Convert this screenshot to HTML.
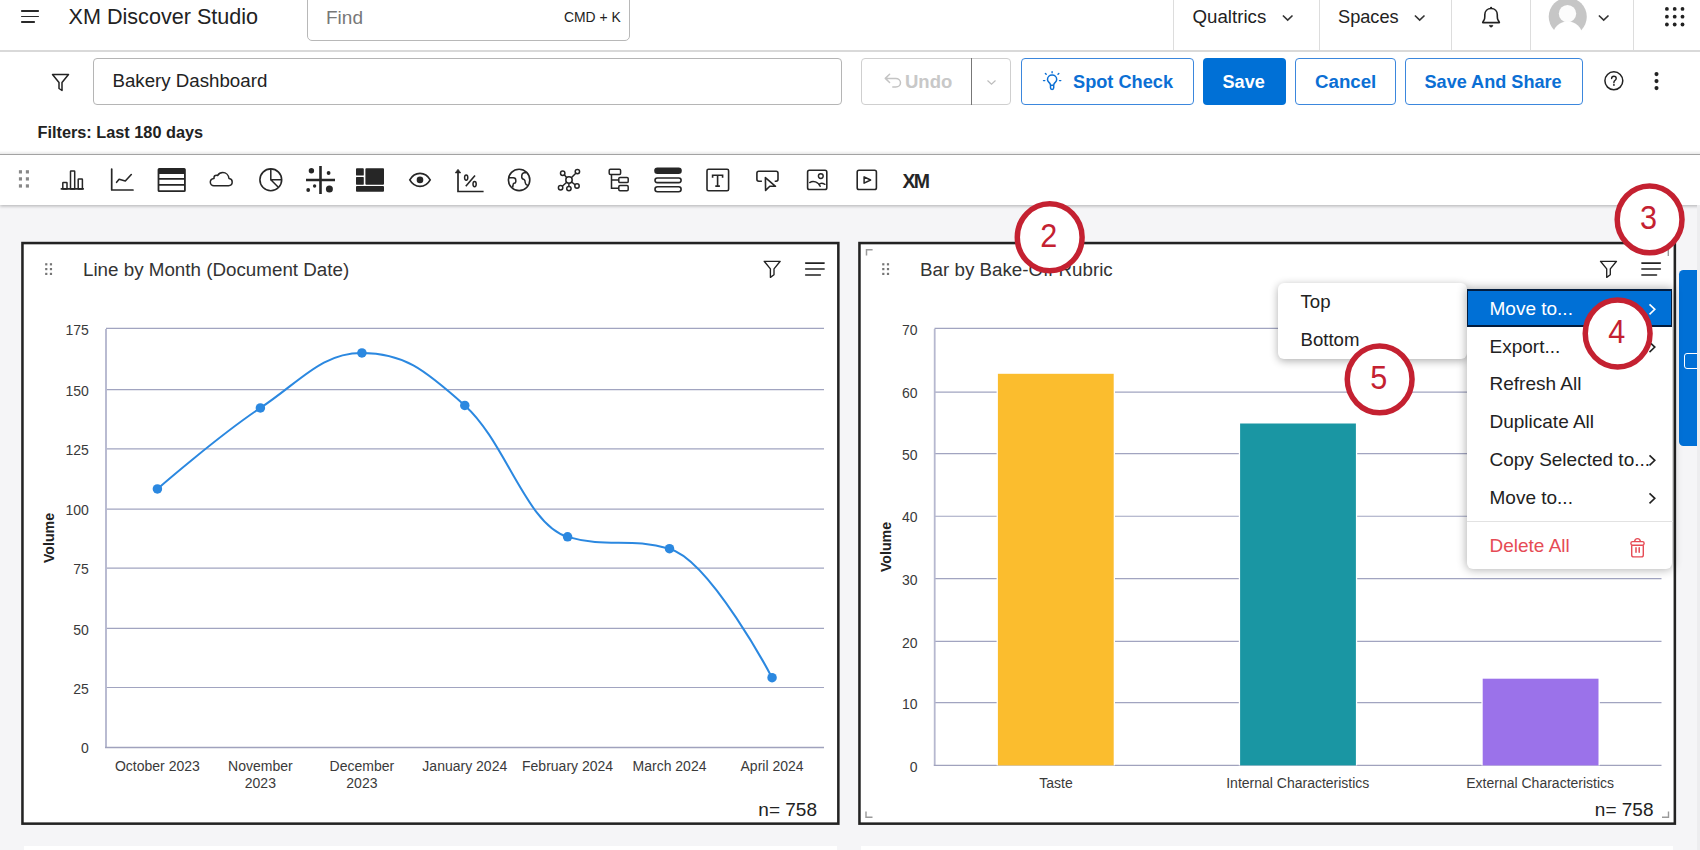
<!DOCTYPE html><html><head><meta charset="utf-8"><style>
html,body{margin:0;padding:0;width:1700px;height:850px;overflow:hidden;background:#f5f5f7;font-family:"Liberation Sans",sans-serif;}
.t{position:absolute;white-space:nowrap;}
</style></head><body>
<div style="position:absolute;left:0px;top:0px;width:1700px;height:154px;background:#fff;"></div>
<div style="position:absolute;left:0px;top:50px;width:1700px;height:1.5px;background:#d9d9d9;"></div>
<div style="position:absolute;left:21.2px;top:10.45px;width:17.6px;height:1.6px;background:#2a2a2a;border-radius:0.8px;"></div>
<div style="position:absolute;left:21.2px;top:15.75px;width:17.6px;height:1.6px;background:#2a2a2a;border-radius:0.8px;"></div>
<div style="position:absolute;left:21.2px;top:21.05px;width:13.7px;height:1.6px;background:#2a2a2a;border-radius:0.8px;"></div>
<div class="t" style="left:68.50px;top:6.21px;font-size:21.6px;line-height:21.6px;color:#222;">XM Discover Studio</div>
<div style="position:absolute;left:306.5px;top:-6px;width:323.5px;height:47px;box-sizing:border-box;border:1px solid #b8b8b8;border-radius:5px;background:#fff;"></div>
<div class="t" style="left:326.00px;top:8.31px;font-size:19px;line-height:19px;color:#777;">Find</div>
<div class="t" style="left:564.00px;top:11.23px;font-size:13.9px;line-height:13.9px;color:#222;">CMD + K</div>
<div style="position:absolute;left:1172.5px;top:0px;width:1.2px;height:50px;background:#dddddd;"></div>
<div style="position:absolute;left:1318.5px;top:0px;width:1.2px;height:50px;background:#dddddd;"></div>
<div style="position:absolute;left:1451px;top:0px;width:1.2px;height:50px;background:#dddddd;"></div>
<div style="position:absolute;left:1530px;top:0px;width:1.2px;height:50px;background:#dddddd;"></div>
<div style="position:absolute;left:1633px;top:0px;width:1.2px;height:50px;background:#dddddd;"></div>
<div class="t" style="left:1192.50px;top:7.97px;font-size:18.7px;line-height:18.7px;color:#222;">Qualtrics</div>
<div class="t" style="left:1338.00px;top:8.39px;font-size:18.2px;line-height:18.2px;color:#222;">Spaces</div>
<svg style="position:absolute;left:1281.5px;top:15px;overflow:visible;" width="11" height="7" viewBox="0 0 11 7"><path d="M0.9 0.5 L5.7 5.1 L10.5 0.5" fill="none" stroke="#333" stroke-width="1.6"/></svg>
<svg style="position:absolute;left:1414px;top:15px;overflow:visible;" width="11" height="7" viewBox="0 0 11 7"><path d="M0.9 0.5 L5.7 5.1 L10.5 0.5" fill="none" stroke="#333" stroke-width="1.6"/></svg>
<svg style="position:absolute;left:1598px;top:15px;overflow:visible;" width="11" height="7" viewBox="0 0 11 7"><path d="M0.9 0.5 L5.7 5.1 L10.5 0.5" fill="none" stroke="#333" stroke-width="1.6"/></svg>
<svg style="position:absolute;left:1481px;top:6px;overflow:visible;" width="20" height="22" viewBox="0 0 20 22"><path d="M1.7 16.6 C1.7 15.9 2.4 15.2 3 14.2 C3.6 13.2 3.8 12 3.8 10.5 V8.8 C3.8 5 6.4 2.5 10.1 2.5 C13.8 2.5 16.3 5 16.3 8.8 V10.5 C16.3 12 16.5 13.2 17.1 14.2 C17.7 15.2 18.4 15.9 18.4 16.6 Z" fill="none" stroke="#222" stroke-width="1.6" stroke-linejoin="round"/><path d="M8.4 19.4 H11.8 C11.5 20.6 10.9 21 10.1 21 C9.3 21 8.7 20.6 8.4 19.4 Z" fill="#222" stroke="#222" stroke-width="0.8" stroke-linejoin="round"/><circle cx="10.1" cy="1.9" r="1.1" fill="#222"/></svg>
<svg style="position:absolute;left:1548px;top:-6px;overflow:visible;" width="40" height="50" viewBox="0 0 40 50"><circle cx="19.75" cy="22.8" r="19.05" fill="#c6c6c6"/><circle cx="19.5" cy="19.6" r="8.7" fill="#fcfcfc"/><ellipse cx="19.6" cy="41.4" rx="14.6" ry="14" fill="#fff"/></svg>
<svg style="position:absolute;left:1665px;top:7px;overflow:visible;" width="20" height="20" viewBox="0 0 20 20"><circle cx="1.9" cy="1.9" r="1.9" fill="#222"/><circle cx="1.9" cy="9.7" r="1.9" fill="#222"/><circle cx="1.9" cy="17.5" r="1.9" fill="#222"/><circle cx="9.7" cy="1.9" r="1.9" fill="#222"/><circle cx="9.7" cy="9.7" r="1.9" fill="#222"/><circle cx="9.7" cy="17.5" r="1.9" fill="#222"/><circle cx="17.5" cy="1.9" r="1.9" fill="#222"/><circle cx="17.5" cy="9.7" r="1.9" fill="#222"/><circle cx="17.5" cy="17.5" r="1.9" fill="#222"/></svg>
<svg style="position:absolute;left:51px;top:73px;overflow:visible;" width="20" height="20" viewBox="0 0 20 20"><path d="M1.5 1.5 H17.5 L11 9.5 V17.5 L8 15.5 V9.5 Z" fill="none" stroke="#222" stroke-width="1.5" stroke-linejoin="round"/></svg>
<div style="position:absolute;left:92.5px;top:58px;width:749px;height:46.5px;box-sizing:border-box;border:1.3px solid #b5b5b5;border-radius:4px;background:#fff;"></div>
<div class="t" style="left:112.50px;top:71.67px;font-size:18.7px;line-height:18.7px;color:#222;">Bakery Dashboard</div>
<div style="position:absolute;left:861px;top:58px;width:150px;height:46.5px;box-sizing:border-box;border:1.3px solid #cfcfcf;border-radius:4px;background:#fff;"></div>
<div style="position:absolute;left:970.5px;top:58px;width:1.3px;height:46.5px;background:#777;"></div>
<svg style="position:absolute;left:0;top:0;overflow:visible" width="1" height="1"><path d="M889.6 74.3 L885.3 78.4 L889.6 82.5 M885.6 78.4 H895.8 C898.5 78.4 900.5 80.4 900.5 82.7 C900.5 85.1 898.5 87 895.8 87 H892.8" fill="none" stroke="#c4c4c4" stroke-width="1.5" stroke-linejoin="round" stroke-linecap="round"/></svg>
<div class="t" style="left:905.00px;top:73.14px;font-size:18.5px;line-height:18.5px;color:#c8c8c8;font-weight:700;">Undo</div>
<svg style="position:absolute;left:986.5px;top:79.5px;overflow:visible;" width="9" height="5" viewBox="0 0 9 5"><path d="M0.5 0.5 L4.5 4.2 L8.5 0.5" fill="none" stroke="#bdbdbd" stroke-width="1.2"/></svg>
<div style="position:absolute;left:1020.5px;top:58px;width:173px;height:46.5px;box-sizing:border-box;border:1.6px solid #3b87dd;border-radius:4px;background:#fff;"></div>
<svg style="position:absolute;left:0;top:0;overflow:visible" width="1" height="1"><path d="M1050.5 85.2 C1050.4 83.9 1049.9 83.2 1049.0 82.4 C1048.1 81.5 1047.5 80.5 1047.5 79.4 C1047.5 76.9 1049.6 75 1052.1 75 C1054.6 75 1056.7 76.9 1056.7 79.4 C1056.7 80.5 1056.1 81.5 1055.2 82.4 C1054.3 83.2 1053.8 83.9 1053.7 85.2 Z M1050.5 85.2 V87.8 C1050.5 88.8 1051.2 89.4 1052.1 89.4 C1053 89.4 1053.7 88.8 1053.7 87.8 V85.2" fill="none" stroke="#0b6fd4" stroke-width="1.5" stroke-linejoin="round"/><path d="M1052.1 71.6 V72.8 M1045.4 73.5 L1046.2 74.3 M1058.8 73.5 L1058 74.3 M1043.5 80.6 H1044.8 M1059.5 80.6 H1060.8" stroke="#0b6fd4" stroke-width="1.4" stroke-linecap="round"/></svg>
<div class="t" style="left:1073.00px;top:73.39px;font-size:18.2px;line-height:18.2px;color:#0b6fd4;font-weight:700;">Spot Check</div>
<div style="position:absolute;left:1202.5px;top:57.5px;width:83px;height:47px;background:#0070d6;border-radius:4px;"></div>
<div class="t" style="left:1222.50px;top:73.47px;font-size:18.1px;line-height:18.1px;color:#fff;font-weight:700;">Save</div>
<div style="position:absolute;left:1295px;top:58px;width:101px;height:46.5px;box-sizing:border-box;border:1.6px solid #3b87dd;border-radius:4px;background:#fff;"></div>
<div class="t" style="left:1315.00px;top:72.97px;font-size:18.7px;line-height:18.7px;color:#0b6fd4;font-weight:700;">Cancel</div>
<div style="position:absolute;left:1405px;top:58px;width:178px;height:46.5px;box-sizing:border-box;border:1.6px solid #3b87dd;border-radius:4px;background:#fff;"></div>
<div class="t" style="left:1424.50px;top:73.47px;font-size:18.1px;line-height:18.1px;color:#0b6fd4;font-weight:700;">Save And Share</div>
<svg style="position:absolute;left:0;top:0;overflow:visible" width="1" height="1"><circle cx="1613.85" cy="80.8" r="8.95" fill="none" stroke="#222" stroke-width="1.5"/><path d="M1611.6 78.5 C1611.6 77 1612.6 76.3 1613.9 76.3 C1615.3 76.3 1616.2 77.2 1616.2 78.4 C1616.2 79.6 1615.3 80.1 1614.6 80.7 C1614 81.2 1613.9 81.7 1613.9 82.7" fill="none" stroke="#222" stroke-width="1.4" stroke-linecap="round"/><circle cx="1613.9" cy="84.9" r="0.95" fill="#222"/></svg>
<svg style="position:absolute;left:0;top:0;overflow:visible" width="1" height="1"><circle cx="1656.5" cy="74.1" r="2.05" fill="#222"/><circle cx="1656.5" cy="81.1" r="2.05" fill="#222"/><circle cx="1656.5" cy="88.1" r="2.05" fill="#222"/></svg>
<div class="t" style="left:37.50px;top:124.20px;font-size:16.3px;line-height:16.3px;color:#222;font-weight:700;">Filters: Last 180 days</div>
<div style="position:absolute;left:0px;top:150.5px;width:1700px;height:3.5px;background:linear-gradient(#fdfdfd,#e9e9e9);"></div>
<div style="position:absolute;left:0px;top:154px;width:1700px;height:1px;background:#a4a4a4;"></div>
<div style="position:absolute;left:0px;top:155px;width:1700px;height:50px;background:#fff;box-shadow:0 1.5px 3px rgba(0,0,0,0.24);"></div>
<svg style="position:absolute;left:0;top:0" width="1700" height="850"><rect x="18.90" y="170.20" width="3.1" height="3.3" fill="#888"/><rect x="18.90" y="177.25" width="3.1" height="3.3" fill="#888"/><rect x="18.90" y="184.30" width="3.1" height="3.3" fill="#888"/><rect x="25.85" y="170.20" width="3.1" height="3.3" fill="#888"/><rect x="25.85" y="177.25" width="3.1" height="3.3" fill="#888"/><rect x="25.85" y="184.30" width="3.1" height="3.3" fill="#888"/><path d="M61.3 188.9 H83.3" stroke="#262626" stroke-width="1.6" stroke-linecap="round"/><rect x="62.8" y="182.6" width="4.2" height="6.3" rx="0.5" fill="none" stroke="#262626" stroke-width="1.5"/><rect x="70.5" y="170.9" width="4.2" height="18" rx="0.5" fill="none" stroke="#262626" stroke-width="1.5"/><rect x="78.2" y="179.1" width="4.2" height="9.8" rx="0.5" fill="none" stroke="#262626" stroke-width="1.5"/><path d="M111.7 169 V190 H133" fill="none" stroke="#262626" stroke-width="1.7" stroke-linecap="round" stroke-linejoin="round"/><path d="M116.6 182.3 L119.1 179.3 L125.3 181 L131.3 174.5" fill="none" stroke="#262626" stroke-width="1.6" stroke-linejoin="round" stroke-linecap="round"/><rect x="158.5" y="168.8" width="26.4" height="22.4" rx="0.8" fill="none" stroke="#262626" stroke-width="1.8"/><rect x="158.5" y="168.8" width="26.4" height="5.2" fill="#262626"/><path d="M158.5 178.9 H185 M158.5 184.9 H185" stroke="#262626" stroke-width="1.7"/><path d="M213.9 185.7 H228.5 C230.6 185.7 232.2 184.1 232.2 182.1 C232.2 180.2 230.8 178.7 229 178.5 C228.6 175.2 226 172.6 222.8 172.6 C220.6 172.6 218.7 173.7 217.6 175.5 C217.2 175.3 216.8 175.2 216.4 175.2 C215 175.2 214 176.3 214 177.6 L214 178.4 C211.9 178.6 210.3 180.2 210.3 182.1 C210.3 184.1 211.9 185.7 213.9 185.7 Z" fill="none" stroke="#262626" stroke-width="1.5" stroke-linejoin="round"/><circle cx="270.8" cy="179.8" r="10.9" fill="none" stroke="#262626" stroke-width="1.6"/><path d="M270.8 168.9 V179.8 H281.7 M270.8 179.8 L278.3 187.2" fill="none" stroke="#262626" stroke-width="1.5"/><path d="M320.5 166 V194 M306 180 H335" stroke="#262626" stroke-width="2.6"/><circle cx="311.4" cy="170.8" r="2.7" fill="#262626"/><circle cx="328.6" cy="173" r="1.9" fill="#262626"/><circle cx="314.6" cy="186" r="1.7" fill="#262626"/><circle cx="308.2" cy="190" r="1.9" fill="#262626"/><circle cx="329.4" cy="189" r="3.5" fill="#262626"/><rect x="356" y="168.2" width="7.8" height="7.4" rx="0.9" fill="#262626"/><rect x="356" y="177.1" width="7.8" height="7.6" rx="0.6" fill="#262626"/><rect x="365.4" y="168.2" width="18.6" height="16.5" rx="0.9" fill="#262626"/><rect x="356" y="186.1" width="28" height="5.6" rx="0.9" fill="#262626"/><path d="M409.8 179.9 C412.3 175.4 415.7 173.4 420 173.4 C424.3 173.4 427.7 175.4 430.2 179.9 C427.7 184.4 424.3 186.4 420 186.4 C415.7 186.4 412.3 184.4 409.8 179.9 Z" fill="none" stroke="#262626" stroke-width="1.7"/><circle cx="420" cy="179.9" r="3.3" fill="#262626"/><path d="M458 171.5 V191.5 H483.6" fill="none" stroke="#262626" stroke-width="1.7"/><path d="M455.2 172.9 L458 169.2 L460.8 172.9 Z" fill="#262626" stroke="#262626" stroke-width="0.6" stroke-linejoin="round"/><ellipse cx="466.2" cy="177.6" rx="1.6" ry="2.6" fill="none" stroke="#262626" stroke-width="1.5"/><ellipse cx="474.6" cy="184.1" rx="1.6" ry="2.6" fill="none" stroke="#262626" stroke-width="1.5"/><path d="M475 175.4 L465.8 186.2" stroke="#262626" stroke-width="1.6"/><circle cx="519.1" cy="179.9" r="10.7" fill="none" stroke="#262626" stroke-width="1.6"/><path d="M508.8 177.7 H513.2 C514.8 177.7 515.8 178.8 515.8 180.2 V181.8 C515.8 182.8 515 183.3 514 183.3 C513.3 183.6 513 184.5 513 185.5 L512.6 187.5" fill="none" stroke="#262626" stroke-width="1.5" stroke-linejoin="round"/><path d="M526.4 172.7 H524 C522.6 172.9 521.8 174.5 521.7 176.3 C521.6 177.8 522.5 179.2 524 179.5 C525 179.9 525.2 181.5 525.3 183 C525.5 184.3 526.3 185 527.9 185.4" fill="none" stroke="#262626" stroke-width="1.5" stroke-linejoin="round"/><circle cx="569" cy="180" r="3.2" fill="none" stroke="#262626" stroke-width="1.5"/><circle cx="562.7" cy="173.2" r="2.2" fill="none" stroke="#262626" stroke-width="1.5"/><circle cx="577.4" cy="171.6" r="2.2" fill="none" stroke="#262626" stroke-width="1.5"/><circle cx="560.6" cy="187.8" r="2.2" fill="none" stroke="#262626" stroke-width="1.5"/><circle cx="568.9" cy="188.6" r="2.2" fill="none" stroke="#262626" stroke-width="1.5"/><circle cx="577" cy="186" r="2.2" fill="none" stroke="#262626" stroke-width="1.5"/><path d="M564.3 174.8 L566.8 177.8 M575.8 173.2 L571.3 177.8 M562.3 186.2 L566.7 182.2 M568.9 186.4 V183.2 M575.3 184.8 L571.5 182" stroke="#262626" stroke-width="1.5"/><rect x="609.2" y="169.2" width="11.4" height="5.3" rx="1.2" fill="none" stroke="#262626" stroke-width="1.5"/><rect x="618.8" y="177.4" width="9.4" height="5.2" rx="1.2" fill="none" stroke="#262626" stroke-width="1.5"/><rect x="618.8" y="185.6" width="9.4" height="5.2" rx="1.2" fill="none" stroke="#262626" stroke-width="1.5"/><path d="M611.5 174.5 V188.2 H618.8 M611.5 180 H618.8" fill="none" stroke="#262626" stroke-width="1.5"/><rect x="654.2" y="167.4" width="27.6" height="6.5" rx="3.2" fill="#262626"/><rect x="655" y="178" width="26.1" height="4.6" rx="2.3" fill="none" stroke="#262626" stroke-width="1.6"/><rect x="655" y="186.7" width="26.1" height="5" rx="2.5" fill="none" stroke="#262626" stroke-width="1.6"/><rect x="707" y="169.3" width="21.6" height="21.4" rx="1.5" fill="none" stroke="#262626" stroke-width="1.6"/><path d="M712.6 177.8 V175.2 H722.6 V177.8 M717.6 175.2 V186.1 M715.3 186.1 H719.9" fill="none" stroke="#262626" stroke-width="1.6"/><path d="M761.9 181.2 H758.8 C757.6 181.2 756.9 180.5 756.9 179.3 V173.2 C756.9 172 757.6 171.3 758.8 171.3 H776.1 C777.3 171.3 778 172 778 173.2 V179.3 C778 180.5 777.3 181.2 776.1 181.2 H774.7" fill="none" stroke="#262626" stroke-width="1.6"/><path d="M765.4 177.6 L775.5 186.3 L769.8 186.3 L765.6 190.4 Z" fill="none" stroke="#262626" stroke-width="1.6" stroke-linejoin="round"/><rect x="807.6" y="170.3" width="19.2" height="19.2" rx="1.8" fill="none" stroke="#262626" stroke-width="1.6"/><circle cx="820.8" cy="176.1" r="2.4" fill="none" stroke="#262626" stroke-width="1.4"/><path d="M809.7 182.6 C811.5 181.3 813.5 181.2 815.5 181.9 C818 182.9 819.8 184.5 820.2 186.4 M818.8 184.6 C820 183.2 822.5 182.9 824.9 184.3" fill="none" stroke="#262626" stroke-width="1.4" stroke-linecap="round"/><rect x="857.2" y="170.3" width="19.2" height="19.2" rx="1.8" fill="none" stroke="#262626" stroke-width="1.6"/><path d="M864.1 176.8 V183.2 L870.6 180 Z" fill="none" stroke="#262626" stroke-width="1.5" stroke-linejoin="round"/></svg>
<div class="t" style="left:902.50px;top:171.99px;font-size:19.5px;line-height:19.5px;color:#262626;font-weight:700;letter-spacing:-1.8px;transform:scaleY(1.05);transform-origin:0 100%;">XM</div>
<div style="position:absolute;left:21.2px;top:241.8px;width:818.4px;height:583.1px;background:#fff;"></div>
<div style="position:absolute;left:858.2px;top:241.8px;width:817.9px;height:583.1px;background:#fff;"></div>
<div style="position:absolute;left:23.8px;top:846.2px;width:813.5px;height:10px;background:#fff;"></div>
<div style="position:absolute;left:861px;top:846.2px;width:812px;height:10px;background:#fff;"></div>
<div style="position:absolute;left:1697.4px;top:205px;width:2.6px;height:645px;background:#ededef;"></div>
<div style="position:absolute;left:1679.4px;top:269.6px;width:18px;height:176.4px;background:#0070d6;border-radius:4.5px 0 0 4.5px;overflow:hidden"><div style="position:absolute;left:4.4px;top:83.1px;width:18px;height:16px;box-sizing:border-box;border:1.6px solid #fff;border-radius:3px;"></div></div>
<svg style="position:absolute;left:0;top:0" width="1700" height="850"><rect x="22.45" y="243.05" width="815.9" height="580.6" fill="none" stroke="#232323" stroke-width="2.55"/><rect x="859.45" y="243.05" width="815.4" height="580.6" fill="none" stroke="#232323" stroke-width="2.55"/><rect x="45.16" y="263.20" width="2.2" height="2.2" fill="#767676"/><rect x="45.16" y="268.00" width="2.2" height="2.2" fill="#767676"/><rect x="45.16" y="272.80" width="2.2" height="2.2" fill="#767676"/><rect x="49.86" y="263.20" width="2.2" height="2.2" fill="#767676"/><rect x="49.86" y="268.00" width="2.2" height="2.2" fill="#767676"/><rect x="49.86" y="272.80" width="2.2" height="2.2" fill="#767676"/><rect x="882.20" y="263.20" width="2.2" height="2.2" fill="#767676"/><rect x="882.20" y="268.00" width="2.2" height="2.2" fill="#767676"/><rect x="882.20" y="272.80" width="2.2" height="2.2" fill="#767676"/><rect x="886.90" y="263.20" width="2.2" height="2.2" fill="#767676"/><rect x="886.90" y="268.00" width="2.2" height="2.2" fill="#767676"/><rect x="886.90" y="272.80" width="2.2" height="2.2" fill="#767676"/><path d="M764.2 261.3 H780.2 L774.0 268.90000000000003 V274.8 L770.4000000000001 277.40000000000003 V268.90000000000003 Z" fill="none" stroke="#222" stroke-width="1.35" stroke-linejoin="round"/><path d="M805.6999999999999 263.05 H824.0999999999999 M805.6999999999999 269.0 H824.0999999999999 M805.6999999999999 274.95 H820.3" stroke="#222" stroke-width="1.65" stroke-linecap="round"/><path d="M1600.5 261.3 H1616.5 L1610.3 268.90000000000003 V274.8 L1606.7 277.40000000000003 V268.90000000000003 Z" fill="none" stroke="#222" stroke-width="1.35" stroke-linejoin="round"/><path d="M1641.9 263.05 H1660.3 M1641.9 269.0 H1660.3 M1641.9 274.95 H1656.5" stroke="#222" stroke-width="1.65" stroke-linecap="round"/><path d="M866.5 255.5 V249.7 H872.6" fill="none" stroke="#9a9a9a" stroke-width="1.5"/><path d="M866 811.5 V817.3 H872.5" fill="none" stroke="#9a9a9a" stroke-width="1.4"/><path d="M1662 817.3 H1668.5 V811.5" fill="none" stroke="#9a9a9a" stroke-width="1.4"/><path d="M1668.3 250 V256" fill="none" stroke="#9a9a9a" stroke-width="1.4"/><path d="M106 687.50 H824" stroke="#a1a4c0" stroke-width="1.2"/><path d="M106 628.36 H824" stroke="#a1a4c0" stroke-width="1.2"/><path d="M106 568.12 H824" stroke="#a1a4c0" stroke-width="1.2"/><path d="M106 509.06 H824" stroke="#a1a4c0" stroke-width="1.2"/><path d="M106 448.83 H824" stroke="#a1a4c0" stroke-width="1.2"/><path d="M106 389.65 H824" stroke="#a1a4c0" stroke-width="1.2"/><path d="M106 328.36 H824" stroke="#a1a4c0" stroke-width="1.2"/><path d="M106 329 V747.5" stroke="#b6b8cf" stroke-width="1.9"/><path d="M105 747.5 H824" stroke="#a0a2bd" stroke-width="1.3"/><path d="M157.40 488.95 C157.40 488.95 219.19 435.33 260.38 407.94 C300.99 380.93 321.30 352.94 361.91 352.94 C403.06 352.94 423.64 368.58 464.79 405.38 C505.90 442.15 526.46 525.02 567.57 536.87 C608.34 548.72 628.73 536.87 669.50 548.72 C710.52 560.57 772.05 677.70 772.05 677.70" fill="none" stroke="#2b88e0" stroke-width="2"/><circle cx="157.40" cy="488.95" r="4.75" fill="#2b88e0"/><circle cx="260.38" cy="407.94" r="4.75" fill="#2b88e0"/><circle cx="361.91" cy="352.94" r="4.75" fill="#2b88e0"/><circle cx="464.79" cy="405.38" r="4.75" fill="#2b88e0"/><circle cx="567.57" cy="536.87" r="4.75" fill="#2b88e0"/><circle cx="669.50" cy="548.72" r="4.75" fill="#2b88e0"/><circle cx="772.05" cy="677.70" r="4.75" fill="#2b88e0"/><path d="M934.5 702.59 H1661.5" stroke="#a1a4c0" stroke-width="1.2"/><path d="M934.5 641.42 H1661.5" stroke="#a1a4c0" stroke-width="1.2"/><path d="M934.5 578.59 H1661.5" stroke="#a1a4c0" stroke-width="1.2"/><path d="M934.5 516.24 H1661.5" stroke="#a1a4c0" stroke-width="1.2"/><path d="M934.5 453.54 H1661.5" stroke="#a1a4c0" stroke-width="1.2"/><path d="M934.5 392.06 H1661.5" stroke="#a1a4c0" stroke-width="1.2"/><path d="M934.5 328.36 H1661.5" stroke="#a1a4c0" stroke-width="1.2"/><path d="M934.7 329 V765.4" stroke="#b6b8cf" stroke-width="1.8"/><path d="M933.8 765.4 H1661.5" stroke="#a0a2bd" stroke-width="1.3"/><rect x="996.6" y="372.5" width="118.4" height="392.9" fill="#fff"/><rect x="997.9" y="373.8" width="115.8" height="391.59999999999997" fill="#fbbd2e"/><rect x="1238.8" y="422.2" width="118.4" height="343.2" fill="#fff"/><rect x="1240.1" y="423.5" width="115.8" height="341.9" fill="#1a96a3"/><rect x="1481.4" y="677.4000000000001" width="118.4" height="87.99999999999993" fill="#fff"/><rect x="1482.7" y="678.7" width="115.8" height="86.69999999999993" fill="#9b72ea"/></svg>
<div class="t" style="left:83.00px;top:260.88px;font-size:18.8px;line-height:18.8px;color:#333;">Line by Month (Document Date)</div>
<div class="t" style="left:920.00px;top:260.88px;font-size:18.8px;line-height:18.8px;color:#333;">Bar by Bake-Off Rubric</div>
<div class="t" style="right:1611.20px;top:740.65px;font-size:14px;line-height:14px;color:#3a3a3a;text-align:right;">0</div>
<div class="t" style="right:1611.20px;top:681.65px;font-size:14px;line-height:14px;color:#3a3a3a;text-align:right;">25</div>
<div class="t" style="right:1611.20px;top:622.51px;font-size:14px;line-height:14px;color:#3a3a3a;text-align:right;">50</div>
<div class="t" style="right:1611.20px;top:562.27px;font-size:14px;line-height:14px;color:#3a3a3a;text-align:right;">75</div>
<div class="t" style="right:1611.20px;top:503.21px;font-size:14px;line-height:14px;color:#3a3a3a;text-align:right;">100</div>
<div class="t" style="right:1611.20px;top:442.98px;font-size:14px;line-height:14px;color:#3a3a3a;text-align:right;">125</div>
<div class="t" style="right:1611.20px;top:383.80px;font-size:14px;line-height:14px;color:#3a3a3a;text-align:right;">150</div>
<div class="t" style="right:1611.20px;top:322.51px;font-size:14px;line-height:14px;color:#3a3a3a;text-align:right;">175</div>
<div class="t" style="right:782.40px;top:759.51px;font-size:14px;line-height:14px;color:#3a3a3a;text-align:right;">0</div>
<div class="t" style="right:782.40px;top:696.74px;font-size:14px;line-height:14px;color:#3a3a3a;text-align:right;">10</div>
<div class="t" style="right:782.40px;top:635.57px;font-size:14px;line-height:14px;color:#3a3a3a;text-align:right;">20</div>
<div class="t" style="right:782.40px;top:572.74px;font-size:14px;line-height:14px;color:#3a3a3a;text-align:right;">30</div>
<div class="t" style="right:782.40px;top:510.39px;font-size:14px;line-height:14px;color:#3a3a3a;text-align:right;">40</div>
<div class="t" style="right:782.40px;top:447.69px;font-size:14px;line-height:14px;color:#3a3a3a;text-align:right;">50</div>
<div class="t" style="right:782.40px;top:386.21px;font-size:14px;line-height:14px;color:#3a3a3a;text-align:right;">60</div>
<div class="t" style="right:782.40px;top:322.51px;font-size:14px;line-height:14px;color:#3a3a3a;text-align:right;">70</div>
<div class="t" style="left:7.40px;width:300px;text-align:center;top:758.95px;font-size:14px;line-height:14px;color:#3a3a3a;">October 2023</div>
<div class="t" style="left:110.38px;width:300px;text-align:center;top:758.95px;font-size:14px;line-height:14px;color:#3a3a3a;">November</div>
<div class="t" style="left:110.38px;width:300px;text-align:center;top:776.45px;font-size:14px;line-height:14px;color:#3a3a3a;">2023</div>
<div class="t" style="left:211.91px;width:300px;text-align:center;top:758.95px;font-size:14px;line-height:14px;color:#3a3a3a;">December</div>
<div class="t" style="left:211.91px;width:300px;text-align:center;top:776.45px;font-size:14px;line-height:14px;color:#3a3a3a;">2023</div>
<div class="t" style="left:314.79px;width:300px;text-align:center;top:758.95px;font-size:14px;line-height:14px;color:#3a3a3a;">January 2024</div>
<div class="t" style="left:417.57px;width:300px;text-align:center;top:758.95px;font-size:14px;line-height:14px;color:#3a3a3a;">February 2024</div>
<div class="t" style="left:519.50px;width:300px;text-align:center;top:758.95px;font-size:14px;line-height:14px;color:#3a3a3a;">March 2024</div>
<div class="t" style="left:622.05px;width:300px;text-align:center;top:758.95px;font-size:14px;line-height:14px;color:#3a3a3a;">April 2024</div>
<div class="t" style="left:906.00px;width:300px;text-align:center;top:776.35px;font-size:14px;line-height:14px;color:#3a3a3a;">Taste</div>
<div class="t" style="left:1147.80px;width:300px;text-align:center;top:776.35px;font-size:14px;line-height:14px;color:#3a3a3a;">Internal Characteristics</div>
<div class="t" style="left:1390.20px;width:300px;text-align:center;top:776.35px;font-size:14px;line-height:14px;color:#3a3a3a;">External Characteristics</div>
<div class="t" style="left:8.600000000000001px;top:530.9px;width:80px;height:14px;line-height:14px;text-align:center;font-size:14.2px;font-weight:700;color:#222;transform:rotate(-90deg);">Volume</div>
<div class="t" style="left:845.6px;top:539.5px;width:80px;height:14px;line-height:14px;text-align:center;font-size:14.2px;font-weight:700;color:#222;transform:rotate(-90deg);">Volume</div>
<div class="t" style="right:883.00px;top:800.11px;font-size:19px;line-height:19px;color:#222;text-align:right;">n= 758</div>
<div class="t" style="right:46.50px;top:800.11px;font-size:19px;line-height:19px;color:#222;text-align:right;">n= 758</div>
<div style="position:absolute;left:1277.6px;top:283.2px;width:189.2px;height:75.9px;background:#fff;border-radius:6px;box-shadow:0 2px 9px rgba(0,0,0,0.32);"></div>
<div class="t" style="left:1300.50px;top:292.75px;font-size:18.6px;line-height:18.6px;color:#222;">Top</div>
<div class="t" style="left:1300.50px;top:330.95px;font-size:18.6px;line-height:18.6px;color:#222;">Bottom</div>
<div style="position:absolute;left:1466.8px;top:289.4px;width:205.7px;height:279.6px;background:#fff;border-radius:0 0 6px 6px;box-shadow:0 0 10px 1px rgba(0,0,0,0.3);"></div>
<div style="position:absolute;left:1466.8px;top:289.4px;width:205.7px;height:37.5px;box-sizing:border-box;background:#0070d6;border:2px solid #021c3e;border-left-width:1.5px;border-right-width:1.5px;"></div>
<div class="t" style="left:1489.50px;top:298.71px;font-size:19px;line-height:19px;color:#fff;">Move to...</div>
<div class="t" style="left:1489.50px;top:336.51px;font-size:19px;line-height:19px;color:#222;">Export...</div>
<div class="t" style="left:1489.50px;top:374.11px;font-size:19px;line-height:19px;color:#222;">Refresh All</div>
<div class="t" style="left:1489.50px;top:412.11px;font-size:19px;line-height:19px;color:#222;">Duplicate All</div>
<div class="t" style="left:1489.50px;top:449.71px;font-size:19px;line-height:19px;color:#222;">Copy Selected to...</div>
<div class="t" style="left:1489.50px;top:487.71px;font-size:19px;line-height:19px;color:#222;">Move to...</div>
<div style="position:absolute;left:1466.5px;top:521px;width:206px;height:1px;background:#e2e2e2;"></div>
<div class="t" style="left:1489.50px;top:536.11px;font-size:19px;line-height:19px;color:#e64b55;">Delete All</div>
<svg style="position:absolute;left:0;top:0" width="1700" height="850"><path d="M1649.5 304.3 L1654.8 309.3 L1649.5 314.3" fill="none" stroke="#fff" stroke-width="1.6"/><path d="M1649.5 342.1 L1654.8 347.1 L1649.5 352.1" fill="none" stroke="#222" stroke-width="1.6"/><path d="M1649.5 455.3 L1654.8 460.3 L1649.5 465.3" fill="none" stroke="#222" stroke-width="1.6"/><path d="M1649.5 493.3 L1654.8 498.3 L1649.5 503.3" fill="none" stroke="#222" stroke-width="1.6"/><rect x="1630.9" y="541.6" width="13.2" height="3.6" rx="1.6" fill="none" stroke="#e64b55" stroke-width="1.4"/><path d="M1634.6 541.6 C1634.8 539.3 1636 538.6 1637.5 538.6 C1639 538.6 1640.2 539.3 1640.4 541.6" fill="none" stroke="#e64b55" stroke-width="1.4"/><path d="M1631.7 545.2 V555 C1631.7 556.2 1632.5 556.9 1633.7 556.9 H1641.3 C1642.5 556.9 1643.3 556.2 1643.3 555 V545.2" fill="none" stroke="#e64b55" stroke-width="1.4"/><path d="M1636 547.8 V552.3 M1639.2 547.8 V552.3" stroke="#e64b55" stroke-width="1.5" stroke-linecap="round"/></svg>
<svg style="position:absolute;left:0;top:0" width="1700" height="850"><ellipse cx="1049.7" cy="237.25" rx="32.4" ry="33.4" fill="#fff" stroke="#c42131" stroke-width="5.5"/><text transform="translate(1048.7,247.15) scale(0.9,1)" text-anchor="middle" font-family="Liberation Sans" font-size="34" fill="#c42131">2</text><ellipse cx="1649.6" cy="219.4" rx="32.4" ry="33.4" fill="#fff" stroke="#c42131" stroke-width="5.5"/><text transform="translate(1648.6,229.3) scale(0.9,1)" text-anchor="middle" font-family="Liberation Sans" font-size="34" fill="#c42131">3</text><ellipse cx="1617.65" cy="333.5" rx="32.4" ry="33.4" fill="#fff" stroke="#c42131" stroke-width="5.5"/><text transform="translate(1616.65,343.4) scale(0.9,1)" text-anchor="middle" font-family="Liberation Sans" font-size="34" fill="#c42131">4</text><ellipse cx="1379.65" cy="379.35" rx="32.4" ry="33.4" fill="#fff" stroke="#c42131" stroke-width="5.5"/><text transform="translate(1378.65,389.25) scale(0.9,1)" text-anchor="middle" font-family="Liberation Sans" font-size="34" fill="#c42131">5</text></svg>
</body></html>
